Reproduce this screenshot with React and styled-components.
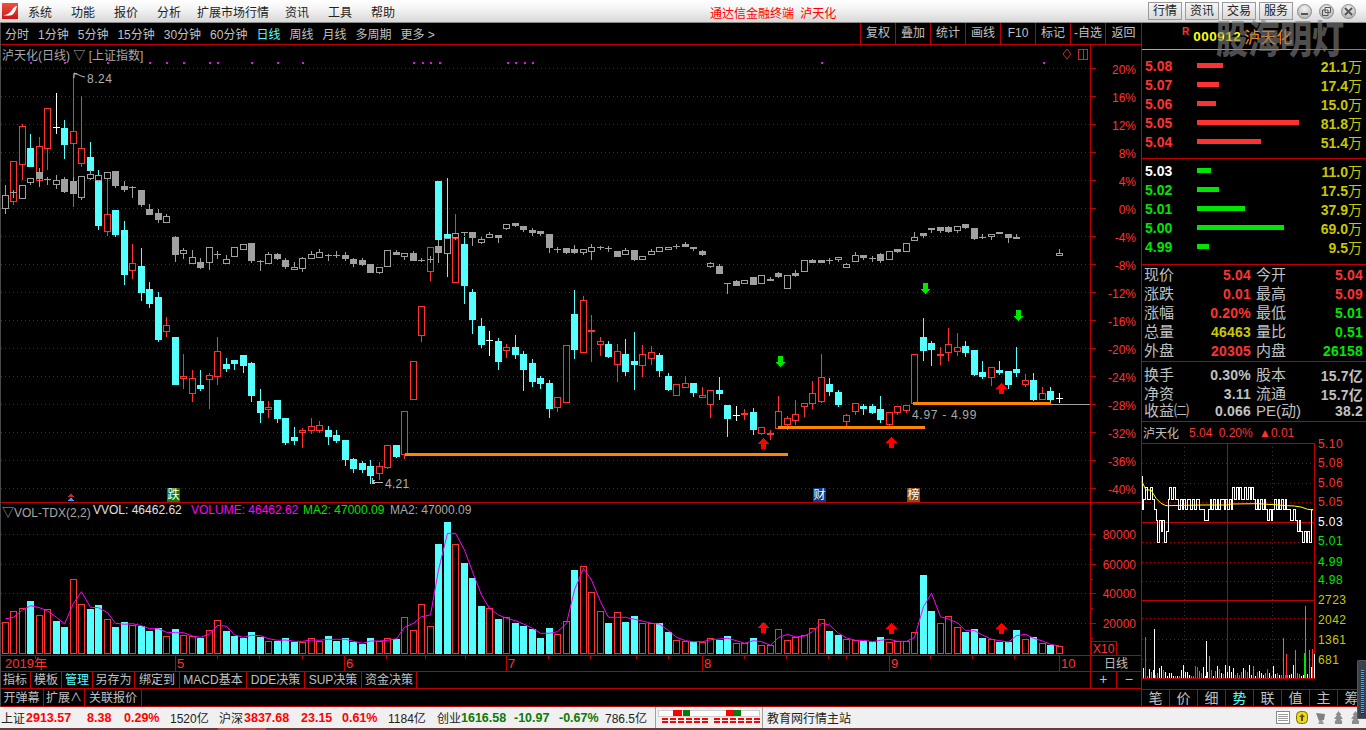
import React from 'react';
import styled, { createGlobalStyle } from 'styled-components';

const FONT = '"Liberation Sans", "Noto Sans CJK SC", sans-serif';
const LINE = '#c00000';
const RED = '#ff3232';
const CYAN = '#54ffff';
const GREEN = '#00e600';
const OLIVE = '#c8c800';
const TEXT = '#c0c0c0';

// kind, body top, body bottom, high, low
const CANDLES = [
  null,
  ['r', 161, 201, 161, 204], ['r', 126, 164, 124, 179], ['c', 148, 166, 134, 166], ['r', 146, 180, 137, 180],
  ['r', 108, 148, 108, 169], ['w', 127, 127, 93, 133], ['c', 128, 144, 120, 158], ['r', 131, 143, 75, 206],
  ['r', 148, 163, 96, 166], ['c', 157, 170, 142, 174], ['c', 177, 225, 170, 229], ['r', 214, 231, 177, 235],
  ['c', 210, 234, 210, 236], ['c', 230, 274, 221, 284], ['r', 263, 270, 244, 278], ['c', 266, 292, 248, 300],
  ['c', 289, 303, 282, 307], ['c', 297, 339, 292, 341], ['r', 325, 331, 317, 336], ['c', 337, 384, 337, 384],
  ['r', 376, 378, 354, 388], ['r', 378, 393, 370, 401], ['c', 385, 388, 370, 390], ['r', 375, 379, 373, 408],
  ['r', 351, 376, 337, 384], ['c', 364, 368, 358, 371], ['c', 360, 363, 360, 369], ['c', 355, 365, 355, 372],
  ['c', 363, 395, 362, 401], ['c', 401, 412, 389, 422], ['r', 407, 409, 401, 417], ['c', 400, 418, 400, 422],
  ['c', 418, 442, 418, 444], ['c', 437, 440, 427, 444], ['r', 430, 432, 428, 447], ['r', 426, 430, 418, 433],
  ['r', 425, 430, 421, 432], ['c', 430, 436, 426, 444], ['c', 435, 440, 430, 442], ['c', 440, 459, 440, 465],
  ['c', 459, 468, 458, 472], ['c', 463, 469, 461, 472], ['c', 466, 475, 460, 483], ['r', 466, 473, 462, 479],
  ['r', 445, 467, 445, 468], ['c', 445, 456, 445, 457], ['r', 411, 454, 411, 458], ['r', 361, 399, 361, 399],
  ['r', 306, 335, 306, 341], ['r', 247, 271, 247, 280], ['c', 181, 239, 181, 262], ['c', 234, 238, 178, 276],
  ['r', 238, 282, 214, 282],
  ['c', 244, 285, 237, 303], ['c', 292, 319, 289, 333], ['c', 326, 344, 318, 347], ['w', 340, 340, 331, 355],
  ['c', 341, 361, 338, 369], ['r', 347, 350, 344, 357], ['c', 347, 354, 335, 358], ['c', 354, 369, 351, 390],
  ['c', 363, 381, 359, 386], ['c', 378, 383, 376, 388], ['c', 383, 408, 380, 417], ['r', 397, 407, 397, 411],
  ['r', 345, 402, 345, 402], ['c', 314, 349, 290, 358], ['r', 300, 352, 296, 352], ['r', 330, 331, 315, 361],
  ['r', 341, 344, 337, 355], ['c', 344, 356, 341, 357], ['r', 351, 364, 344, 381], ['c', 354, 371, 339, 375],
  ['c', 361, 364, 332, 389], ['r', 354, 365, 345, 376], ['r', 352, 358, 346, 364], ['c', 355, 370, 353, 376],
  ['c', 376, 389, 373, 390], ['r', 384, 395, 384, 395], ['r', 383, 387, 376, 387], ['c', 383, 392, 383, 396],
  ['r', 395, 397, 387, 397], ['r', 390, 404, 390, 417], ['c', 390, 393, 377, 399], ['c', 405, 418, 405, 436],
  ['w', 415, 415, 406, 420], ['r', 413, 414, 409, 419], ['c', 412, 429, 408, 434], ['r', 427, 433, 427, 434],
  ['r', 433, 434, 430, 439], ['r', 411, 428, 396, 428], ['r', 418, 424, 416, 429], ['r', 414, 420, 400, 424],
  ['r', 403, 406, 403, 416], ['r', 393, 403, 381, 408], ['r', 377, 401, 354, 402], ['c', 384, 391, 378, 395],
  ['c', 392, 404, 390, 406], ['r', 415, 421, 414, 425], ['r', 403, 411, 403, 414], ['c', 406, 408, 404, 414],
  ['c', 406, 412, 404, 413], ['c', 409, 419, 396, 422], ['r', 412, 424, 412, 426], ['r', 406, 412, 406, 414],
  ['r', 405, 410, 405, 412], ['r', 354, 403, 354, 403], ['c', 337, 350, 318, 360], ['c', 343, 349, 341, 365],
  ['r', 354, 355, 347, 364], ['r', 344, 352, 328, 360], ['r', 347, 351, 333, 355], ['c', 346, 352, 341, 356],
  ['c', 350, 374, 350, 375], ['c', 372, 376, 361, 378], ['r', 367, 377, 367, 385], ['c', 370, 372, 361, 374],
  ['c', 371, 384, 371, 388], ['c', 369, 372, 347, 376], ['r', 380, 384, 374, 386], ['c', 380, 399, 373, 400],
  ['r', 393, 399, 387, 399], ['c', 391, 399, 387, 403], ['w', 398, 398, 393, 402],
];

// the 上证指数 overlay: s solid, h hollow, t thin
const INDEX = [
  ['h', 195, 208, 185, 213], ['t', 192, 192, 190, 197], ['h', 185, 198, 185, 198], ['h', 178, 182, 178, 184],
  ['s', 172, 178, 168, 186], ['t', 179, 179, 177, 184], ['h', 180, 184, 175, 188], ['s', 179, 191, 177, 192],
  ['s', 181, 193, 177, 193], ['h', 176, 197, 176, 199], ['h', 174, 178, 170, 179], ['h', 175, 180, 175, 181],
  ['h', 172, 178, 172, 178], ['s', 171, 185, 171, 187], ['s', 186, 189, 181, 191], ['t', 187, 187, 186, 197],
  ['s', 190, 204, 190, 206], ['s', 209, 214, 204, 214], ['s', 213, 219, 209, 222], ['h', 216, 222, 214, 222],
  ['s', 237, 254, 236, 261], ['h', 250, 253, 248, 258], ['h', 257, 263, 250, 263], ['s', 262, 267, 258, 268],
  ['h', 247, 262, 247, 269], ['t', 254, 254, 251, 258], ['h', 259, 263, 255, 263], ['h', 247, 256, 247, 256],
  ['h', 244, 249, 244, 249], ['s', 243, 260, 243, 262], ['t', 261, 261, 260, 270], ['h', 254, 263, 252, 263],
  ['s', 254, 258, 253, 259], ['s', 260, 266, 258, 268], ['h', 267, 269, 262, 269], ['h', 258, 268, 257, 271],
  ['h', 254, 258, 251, 258], ['h', 252, 257, 249, 257], ['t', 255, 255, 254, 260], ['t', 255, 255, 251, 257],
  ['s', 255, 258, 252, 260], ['s', 259, 263, 258, 266], ['s', 260, 264, 258, 265], ['s', 264, 272, 264, 272],
  ['h', 267, 272, 267, 273], ['h', 250, 266, 250, 266], ['s', 252, 254, 250, 254], ['h', 253, 256, 253, 259],
  ['s', 253, 260, 251, 260], ['t', 260, 260, 258, 261], ['t', 259, 259, 256, 262], ['s', 246, 252, 240, 262],
  ['h', 238, 253, 238, 253], ['h', 233, 237, 233, 239],
  ['t', 232, 232, 232, 235], ['s', 232, 237, 232, 245], ['h', 239, 242, 237, 243], ['h', 234, 237, 232, 237],
  ['s', 235, 237, 235, 242], ['h', 224, 228, 224, 229], ['s', 223, 225, 223, 226], ['s', 226, 229, 226, 231],
  ['s', 230, 232, 228, 235], ['s', 231, 233, 231, 235], ['s', 234, 247, 234, 252], ['t', 249, 249, 247, 252],
  ['s', 248, 252, 248, 253], ['s', 249, 252, 245, 253], ['h', 249, 252, 249, 254], ['h', 247, 251, 244, 259],
  ['t', 247, 247, 246, 249], ['t', 248, 248, 246, 251], ['s', 251, 256, 251, 256], ['h', 250, 254, 248, 254],
  ['s', 250, 259, 250, 260], ['h', 256, 259, 256, 259], ['h', 251, 254, 249, 254], ['h', 247, 251, 247, 251],
  ['h', 247, 249, 247, 249], ['t', 246, 246, 244, 248], ['s', 244, 246, 242, 246], ['s', 247, 248, 247, 250],
  ['s', 251, 254, 250, 255], ['h', 263, 266, 262, 267], ['s', 266, 273, 264, 273], ['t', 283, 283, 283, 293],
  ['s', 281, 285, 280, 285], ['h', 280, 283, 280, 283], ['s', 277, 284, 277, 284], ['h', 275, 283, 275, 283],
  ['s', 279, 280, 277, 280], ['s', 273, 276, 272, 277], ['h', 275, 288, 275, 288], ['s', 273, 275, 270, 276],
  ['h', 260, 271, 260, 271], ['s', 260, 262, 259, 262], ['s', 260, 262, 260, 262], ['t', 260, 260, 258, 263],
  ['h', 257, 259, 257, 261], ['h', 264, 267, 263, 267], ['h', 255, 261, 252, 261], ['s', 255, 257, 255, 259],
  ['t', 258, 258, 256, 261], ['s', 254, 260, 253, 262], ['h', 251, 259, 251, 259], ['s', 249, 251, 249, 252],
  ['h', 243, 251, 243, 251], ['h', 237, 240, 232, 240], ['s', 233, 235, 233, 237], ['s', 228, 229, 228, 232],
  ['s', 227, 230, 227, 232], ['s', 227, 231, 226, 232], ['h', 226, 230, 226, 232], ['s', 224, 227, 224, 228],
  ['s', 228, 238, 228, 239], ['t', 237, 237, 234, 238], ['h', 234, 236, 234, 239], ['s', 232, 233, 232, 233],
  ['s', 234, 237, 234, 242], ['s', 237, 238, 234, 238], null, null, null, null,
  ['h', 253, 255, 249, 255],
];

const VOL_TOPS = [
  622, 611, 608, 601, 615, 609, 621, 627, 579, 604, 609, 605, 619, 627, 622, 625, 626, 631, 628, 636,
  629, 635, 636, 638, 630, 620, 631, 636, 638, 632, 637, 641, 641, 638, 642, 642, 638, 641, 636, 641,
  638, 642, 644, 638, 641, 638, 639, 617, 630, 604, 626, 544, 522, 544, 563, 578, 606, 608, 619, 617,
  623, 626, 629, 638, 628, 634, 621, 570, 566, 592, 611, 623, 612, 622, 616, 623, 623, 623, 632, 640,
  641, 642, 642, 638, 640, 636, 643, 643, 638, 645, 645, 629, 640, 637, 635, 628, 619, 631, 635, 639,
  640, 641, 642, 637, 642, 641, 641, 632, 575, 611, 623, 616, 627, 632, 629, 638, 639, 642, 642, 630,
  639, 637, 643, 645, 646,
];
const VOL_KIND = { 0: 'r', 6: 'c', 57: 'r', 86: 'r', 124: 'r' };

const MA_LINE = [
  356, 352, 330, 317, 323, 333, 352, 372, 310, 275, 322, 323, 338, 370, 373, 371, 377, 386, 386, 397,
  398, 398, 408, 412, 402, 376, 379, 405, 412, 406, 407, 416, 421, 420, 424, 424, 420, 421, 418, 418,
  418, 424, 430, 423, 423, 421, 416, 382, 370, 350, 345, 210, 100, 100, 150, 215, 285, 325, 345, 355,
  362, 372, 385, 400, 400, 395, 370, 270, 205, 240, 305, 352, 352, 352, 358, 363, 370, 372, 392, 412,
  422, 425, 425, 419, 417, 415, 422, 430, 422, 425, 436, 413, 403, 411, 408, 395, 370, 375, 400, 414,
  421, 421, 425, 421, 418, 424, 424, 412, 320, 280, 350, 358, 368, 392, 392, 405, 418, 422, 426, 407,
  403, 415, 423, 433, 438,
].map(v => 500 + v / 3);

const DOTS = [30, 64, 107, 149, 166, 183, 209, 217, 251, 277, 302, 413, 422, 430, 439, 507, 515, 524, 532, 821, 1043];
const PERCENTS = ['20%', '16%', '12%', '8%', '4%', '0%', '-4%', '-8%', '-12%', '-16%', '-20%', '-24%', '-28%', '-32%', '-36%', '-40%'];
const VOL_AXIS = [['80000', 534], ['60000', 564], ['40000', 593], ['20000', 623]];

const ASKS = [['5.08', 26, '21.1'], ['5.07', 22, '17.4'], ['5.06', 19, '15.0'], ['5.05', 102, '81.8'], ['5.04', 64, '51.4']];
const BIDS = [['5.03', 14, '11.0'], ['5.02', 22, '17.5'], ['5.01', 48, '37.9'], ['5.00', 87, '69.0'], ['4.99', 12, '9.5']];

const QUOTES = [
  ['现价', '5.04', RED, '今开', '5.04', RED],
  ['涨跌', '0.01', RED, '最高', '5.09', RED],
  ['涨幅', '0.20%', RED, '最低', '5.01', GREEN],
  ['总量', '46463', OLIVE, '量比', '0.51', GREEN],
  ['外盘', '20305', RED, '内盘', '26158', GREEN],
];
const FINANCE = [
  ['换手', '0.30%', '股本', '15.7亿'],
  ['净资', '3.11', '流通', '15.7亿'],
  ['收益㈡', '0.066', 'PE(动)', '38.2'],
];

const INTRA_AXIS = [
  ['5.10', 448, RED], ['5.08', 467, RED], ['5.06', 487, RED], ['5.05', 506, RED], ['5.03', 526, '#fff'],
  ['5.01', 545, GREEN], ['4.99', 566, GREEN], ['4.98', 584, GREEN], ['2723', 604, OLIVE], ['2042', 624, OLIVE],
  ['1361', 644, OLIVE], ['681', 664, OLIVE],
];
const LEVELS = { a: 487, b: 499, c: 509, d: 520, e: 531, f: 542 };
const INTRA_STEPS = 'cbabbabcdfdedfebababbcbcbcbbcbcbbcccddcbcbcbcbbcbcbcabababbabababcbcbcbcdcdcbcbcbcbccddcdedefefefc';
const INTRA_AVG = [[3, 125], [15, 150], [30, 150], [45, 175], [60, 190], [75, 197], [180, 195], [260, 195], [270, 192], [350, 191], [400, 194], [440, 197], [460, 198], [480, 201], [500, 208], [517, 210]];
const INTRA_VOL_PEAKS = [[1145, 637, RED], [1154, 629, '#fff'], [1206, 641, '#fff'], [1209, 656, GREEN], [1283, 638, GREEN], [1286, 654, RED], [1295, 650, GREEN], [1305, 606, GREEN], [1304, 653, GREEN], [1309, 650, GREEN], [1312, 649, RED], [1314, 654, '#fff']];

const xAt = i => Math.floor(5.3 + 8.5 * i);

function candleColor(kind) {
  if (kind === 'r') return RED;
  if (kind === 'c') return CYAN;
  if (kind === 'w') return '#fff';
  return '#a0a0a0';
}

const GlobalStyle = createGlobalStyle`
  html, body { margin: 0; padding: 0; background: #000; }
  body { font-family: ${FONT}; font-size: 12px; }
`;

const Window = styled.div`
  position: relative;
  width: 1366px;
  height: 730px;
  overflow: hidden;
  display: flex;
  flex-direction: column;
  background: #000;
  &::after {
    content: '';
    position: absolute;
    left: 0;
    top: 23px;
    bottom: 23px;
    width: 1px;
    background: #4a4a4a;
  }
`;

const TitleBar = styled.header`
  height: 23px;
  flex: none;
  box-sizing: border-box;
  display: flex;
  align-items: center;
  padding-left: 2px;
  background: linear-gradient(#ffffff, #f4f4f4 40%, #d8d8d8);
  border-bottom: 1px solid #8a8a8a;
`;

const Menu = styled.nav`
  display: flex;
  margin-left: 10px;
`;

const MenuItem = styled.span`
  width: ${p => p.$w}px;
  color: #222;
  font-size: 12px;
`;

const AppTitle = styled.span`
  position: absolute;
  left: 710px;
  top: 4px;
  color: #f00;
  font-size: 12px;
  word-spacing: 3px;
`;

const TopButtons = styled.div`
  margin-left: auto;
  display: flex;
  align-items: center;
  gap: 3px;
  padding-right: 10px;
`;

const TopButton = styled.span`
  width: 34px;
  height: 18px;
  box-sizing: border-box;
  border: 1px solid #9a9a9a;
  background: linear-gradient(#f6f6f6, #d8d8d8);
  color: #222;
  font-size: 12px;
  line-height: 16px;
  text-align: center;
`;

const RoundButton = styled.span`
  width: 15px;
  height: 15px;
  flex: none;
  box-sizing: border-box;
  margin-left: ${p => p.$gap || 4}px;
  border-radius: 50%;
  border: 1px solid #8a8a8a;
  background: radial-gradient(circle at 50% 30%, #f4f4f4, #a8a8a8);
  display: flex;
  align-items: center;
  justify-content: center;
`;

const Watermark = styled.div`
  position: absolute;
  left: 1216px;
  top: 15px;
  color: rgba(125, 125, 125, 0.65);
  font: 900 32px "Noto Sans CJK SC", sans-serif;
  line-height: 42px;
  transform: scaleY(1.2);
  z-index: 3;
  pointer-events: none;
`;

const Body = styled.main`
  flex: 1;
  min-height: 0;
  display: flex;
`;

const ChartColumn = styled.section`
  width: 1141px;
  flex: none;
  display: flex;
  flex-direction: column;
`;

const PeriodBar = styled.div`
  height: 22px;
  flex: none;
  box-sizing: border-box;
  border-bottom: 1px solid ${LINE};
  display: flex;
  align-items: center;
  padding-left: 5px;
  gap: 9px;
  color: ${TEXT};
`;

const Period = styled.span`
  color: ${p => (p.$active ? CYAN : TEXT)};
  font-size: 12px;
`;

const ToolStrip = styled.div`
  margin-left: auto;
  height: 100%;
  display: flex;
`;

const ToolCell = styled.span`
  width: ${p => p.$w || 35}px;
  box-sizing: border-box;
  border-left: 1px solid ${LINE};
  text-align: center;
  line-height: 21px;
  color: ${TEXT};
`;

const Pane = styled.div`
  position: relative;
  flex: none;
  height: ${p => p.$h}px;
`;

const PaneHead = styled.div`
  position: absolute;
  left: ${p => p.$x}px;
  top: ${p => p.$y}px;
  color: ${p => p.$color || '#a8a8a8'};
  font-size: 12px;
  white-space: nowrap;
`;

const Drawing = styled.svg`
  display: block;
  overflow: visible;
  font-family: ${FONT};
  font-size: 12px;
`;

const DateRow = styled.div`
  height: 16px;
  flex: none;
  display: flex;
`;

const SideCell = styled.div`
  width: 51px;
  flex: none;
  box-sizing: border-box;
  border-left: 1px solid ${LINE};
  border-bottom: 1px solid ${LINE};
  color: ${TEXT};
  text-align: center;
  line-height: 16px;
`;

const TabRow = styled.div`
  height: ${p => p.$h}px;
  flex: none;
  box-sizing: border-box;
  display: flex;
  border-bottom: 1px solid ${LINE};
`;

const Tab = styled.span`
  width: ${p => p.$w}px;
  box-sizing: border-box;
  border-right: 1px solid ${LINE};
  text-align: center;
  color: ${p => (p.$active ? CYAN : TEXT)};
  line-height: ${p => p.$lh || 16}px;
`;

const ZoomBox = styled.div`
  margin-left: auto;
  width: 51px;
  box-sizing: border-box;
  border-left: 1px solid ${LINE};
  display: flex;
  color: ${TEXT};
  span {
    flex: 1;
    text-align: center;
    font-size: 14px;
    line-height: 15px;
  }
  span + span { border-left: 1px solid ${LINE}; }
`;

const SidePanel = styled.aside`
  flex: 1;
  min-width: 0;
  box-sizing: border-box;
  border-left: 1px solid ${LINE};
  display: flex;
  flex-direction: column;
`;

const StockHead = styled.div`
  height: 27px;
  flex: none;
  box-sizing: border-box;
  display: flex;
  align-items: center;
  padding-left: 40px;
  border-bottom: 1px solid;
  border-image: linear-gradient(90deg, #e0a030 66%, #4a90c8 66%) 1;
`;

const RFlag = styled.span`
  color: ${RED};
  font-weight: bold;
  font-size: 10px;
  margin-right: 4px;
  margin-top: -9px;
`;

const StockCode = styled.span`
  color: #ff0;
  font-weight: bold;
  font-size: 13.5px;
  letter-spacing: .5px;
`;

const StockName = styled.span`
  color: #ff8c1a;
  font-size: 16px;
  margin-left: 3px;
`;

const BookSection = styled.div`
  flex: none;
  padding: ${p => p.$pad};
  border-bottom: 1px solid ${LINE};
`;

const BookRow = styled.div`
  height: 19px;
  display: flex;
  align-items: center;
  padding-left: 3px;
`;

const BookPrice = styled.span`
  width: 52px;
  flex: none;
  color: ${p => p.$color};
  font-weight: bold;
  font-size: 14px;
`;

const BookBar = styled.i`
  display: block;
  height: 5px;
  background: ${p => p.$color};
`;

const BookVol = styled.span`
  margin-left: auto;
  padding-right: 4px;
  color: ${OLIVE};
  font-weight: bold;
  font-size: 14px;
  small {
    font-weight: normal;
    font-size: 14px;
  }
`;

const QuoteBlock = styled.div`
  flex: none;
  height: ${p => p.$h}px;
  box-sizing: border-box;
  padding: ${p => p.$top || 0}px 0 0 2px;
  border-bottom: 1px solid ${LINE};
`;

const QuoteRow = styled.div`
  height: ${p => p.$h}px;
  display: grid;
  grid-template-columns: 107px 107px;
  gap: 5px;
  align-items: center;
`;

const QuoteCell = styled.div`
  display: flex;
  justify-content: space-between;
  align-items: center;
`;

const QuoteLabel = styled.span`
  color: ${TEXT};
  font-size: 15px;
  line-height: 18px;
`;

const QuoteValue = styled.span`
  color: ${p => p.$color || TEXT};
  font-weight: bold;
  font-size: 14px;
  letter-spacing: .2px;
`;

const IntraHead = styled.div`
  height: 21px;
  flex: none;
  display: flex;
  align-items: center;
  padding-left: 1px;
  color: ${RED};
  font-size: 12px;
  word-spacing: 3px;
`;

const IntraName = styled.span`
  color: ${TEXT};
  width: 46px;
  font-size: 12px;
`;

const SideTabs = styled.div`
  flex: none;
  height: 18px;
  box-sizing: border-box;
  display: flex;
  border-top: 1px solid ${LINE};
  border-bottom: 1px solid ${LINE};
`;

const SideTab = styled.span`
  width: 28px;
  flex: none;
  box-sizing: border-box;
  border-right: 1px solid ${LINE};
  text-align: center;
  font-size: 14px;
  line-height: 16px;
  color: ${p => (p.$active ? CYAN : TEXT)};
`;

const StatusBar = styled.footer`
  height: 21px;
  flex: none;
  display: flex;
  align-items: center;
  padding-left: 1px;
  background: #f0f0f0;
  color: #222;
`;

const StatusCell = styled.span`
  width: ${p => p.$w}px;
  flex: none;
  color: ${p => p.$color || '#222'};
  font-weight: ${p => (p.$color ? 'bold' : 'normal')};
  font-size: ${p => (p.$color ? 12.5 : 12)}px;
  white-space: nowrap;
`;

const StatusDivider = styled.i`
  display: block;
  width: 1px;
  height: 21px;
  margin: 0 ${p => p.$after || 2}px 0 ${p => p.$before || 0}px;
  background: #a0a0a0;
`;

const TrayIcons = styled.div`
  margin-left: auto;
  padding-right: 5px;
  display: flex;
  align-items: center;
  gap: 6px;
`;

const BottomStrip = styled.div`
  height: 2px;
  flex: none;
  background: linear-gradient(90deg, #6b3a3a 218px, #b85050 218px, #b85050 266px, #6b3a3a 266px);
`;

const Meter = styled.div`
  position: absolute;
  left: 1357px;
  top: 660px;
  width: 9px;
  height: 59px;
  box-sizing: border-box;
  border: 1px solid #555;
  border-right: 0;
  border-radius: 2px 0 0 2px;
  background: #39414a;
  padding: 9px 2px 4px 3px;
  z-index: 2;
`;

const MeterTrack = styled.div`
  width: 3px;
  height: 100%;
  background: repeating-linear-gradient(#6aa8d8 0 1px, #1a2a3a 1px 2px);
`;

function Candle({ x, d }) {
  const [kind, top, bot, high, low] = d;
  const color = candleColor(kind);
  const mid = x + 0.5;
  const wick = <line x1={mid} x2={mid} y1={high} y2={low + 1} stroke={color} />;
  if (bot - top < 1 || kind === 'w' || kind === 't') {
    return (
      <g>
        {wick}
        <line x1={x - 3} x2={x + 4} y1={top + 0.5} y2={top + 0.5} stroke={color} />
      </g>
    );
  }
  if (kind === 'c' || kind === 's') {
    return (
      <g>
        {wick}
        <rect x={x - 3} y={top} width={7} height={bot - top + 1} fill={color} />
      </g>
    );
  }
  return (
    <g>
      {wick}
      <rect x={x - 2.5} y={top + 0.5} width={6} height={bot - top} fill="#000" stroke={color} />
    </g>
  );
}

function Arrow({ x, top, up }) {
  const color = up ? '#f00' : GREEN;
  const path = up
    ? `M${x + 0.5} ${top}l5.500 5.500h-3v5.500h-5v-5.500h-3z`
    : `M${x + 0.5} ${top + 11}l5.500 -5.500h-3v-5.500h-5v5.500h-3z`;
  return <path d={path} fill={color} />;
}

function Badge({ x, bg, children }) {
  return (
    <g>
      <rect x={x} y={488} width={13} height={14} fill={bg} />
      <text x={x + 0.5} y={499} fill="#fff" fontSize="12">{children}</text>
    </g>
  );
}

function PriceChart() {
  return (
    <Drawing width="1141" height="458" viewBox="0 45 1141 458" shapeRendering="crispEdges">
      {PERCENTS.map((label, i) => {
        const y = 68.5 + 28 * i;
        return (
          <g key={label}>
            <line x1="1" x2="1090" y1={y} y2={y} stroke="#b00000" strokeDasharray="1 3" />
            <line x1="1090" x2="1096" y1={y} y2={y} stroke={LINE} />
            <text x="1136" y={y + 5} textAnchor="end" fill={RED} shapeRendering="auto">{label}</text>
          </g>
        );
      })}
      <line x1="1090.5" x2="1090.5" y1="45" y2="503" stroke={LINE} />
      <line x1="0" x2="1141" y1="502.5" y2="502.5" stroke={LINE} />
      {DOTS.map(x => <rect key={x} x={x} y="62" width="2" height="2" fill="#f0f" />)}
      {CANDLES.map((d, i) => d && <Candle key={i} x={xAt(i)} d={d} />)}
      {INDEX.map((d, i) => d && <Candle key={i} x={xAt(i)} d={d} />)}
      <rect x="405" y="453" width="383" height="3" fill="#ff8400" />
      <rect x="778" y="426" width="147" height="3" fill="#ff8400" />
      <rect x="913" y="402" width="138" height="3" fill="#ff8400" />
      <line x1="1051" x2="1090" y1="404.5" y2="404.5" stroke="#a0a0a0" />
      <Arrow x={780} top={356} />
      <Arrow x={925} top={283} />
      <Arrow x={1018} top={310} />
      <Arrow x={763} top={438} up />
      <Arrow x={891} top={437} up />
      <Arrow x={1001} top={383} up />
      <path d="M74 73v5M74 73l3 1M74 74h3l2 1 2 1 4 1" fill="none" stroke="#bbb" shapeRendering="auto" />
      <text x="87" y="83" fill="#b0b0b0" letterSpacing=".5">8.24</text>
      <path d="M372 478v6M372 482h11M372 482l3-2M372 482l3 2" fill="none" stroke="#bbb" />
      <text x="385" y="488" fill="#b0b0b0" letterSpacing=".3">4.21</text>
      <text x="912" y="419" fill="#a8a8a8" letterSpacing=".7">4.97 - 4.99</text>
      <path d="M71 493l3 4h-7z" fill="#d02020" />
      <path d="M71 497l3 4h-7z" fill="#30a0ff" />
      <Badge x={167} bg="#0a7a0a">跌</Badge>
      <Badge x={813} bg="#0a3a8a">财</Badge>
      <Badge x={907} bg="#8a4a10">榜</Badge>
      <path d="M1067 49l4 5-4 5-4-5z" fill="none" stroke="#c03030" shapeRendering="auto" />
      <rect x="1078.5" y="49.5" width="9" height="10" fill="none" stroke="#c03030" />
      <line x1="1083.5" x2="1083.5" y1="49" y2="60" stroke="#c03030" />
    </Drawing>
  );
}

function VolumeChart() {
  const maPoints = MA_LINE.map((y, i) => `${xAt(i) + 0.5},${y.toFixed(1)}`).join(' ');
  return (
    <Drawing width="1141" height="153" viewBox="0 503 1141 153">
      <g shapeRendering="crispEdges">
        {VOL_AXIS.map(([label, y]) => (
          <g key={label}>
            <line x1="1" x2="1090" y1={y + 0.5} y2={y + 0.5} stroke="#b00000" strokeDasharray="1 3" />
            <line x1="1090" x2="1096" y1={y + 0.5} y2={y + 0.5} stroke={LINE} />
            <line x1="1090" x2="1093" y1={y + 15.5} y2={y + 15.5} stroke={LINE} />
          </g>
        ))}
        <line x1="1090.5" x2="1090.5" y1="503" y2="656" stroke={LINE} />
        <line x1="0" x2="1141" y1="655.5" y2="655.5" stroke={LINE} />
        {VOL_TOPS.map((top, i) => {
          const x = xAt(i);
          const kind = VOL_KIND[i] || CANDLES[i][0];
          return kind === 'c'
            ? <rect key={i} x={x - 3} y={top} width={7} height={654 - top} fill={CYAN} />
            : <rect key={i} x={x - 2.5} y={top + 0.5} width={6} height={653 - top} fill="#000" stroke={RED} />;
        })}
        <rect x="1091.5" y="641.5" width="25" height="14" fill="#000" stroke={LINE} />
      </g>
      <polyline points={maPoints} fill="none" stroke="#f0f" />
      <g shapeRendering="crispEdges">
        <Arrow x={763} top={622} up />
        <Arrow x={891} top={623} up />
        <Arrow x={1001} top={623} up />
      </g>
      {VOL_AXIS.map(([label, y]) => (
        <text key={label} x="1136" y={y + 5} textAnchor="end" fill={RED}>{label}</text>
      ))}
      <text x="1093" y="653" fill={RED}>X10</text>
    </Drawing>
  );
}

function DateAxis() {
  const major = [[175, '5'], [344, '6'], [506, '7'], [702, '8'], [889, '9'], [1059, '10']];
  const minor = [217, 259, 302, 386, 425, 465, 548, 590, 636, 668, 744, 786, 828, 846, 930, 972, 1014];
  return (
    <Drawing width="1090" height="16" viewBox="0 656 1090 16" shapeRendering="crispEdges">
      <line x1="0" x2="1090" y1="671.5" y2="671.5" stroke={LINE} />
      <line x1="35.5" x2="35.5" y1="656" y2="659" stroke={LINE} />
      {minor.map(x => <line key={x} x1={x + 0.5} x2={x + 0.5} y1="656" y2="659" stroke={LINE} />)}
      {major.map(([x, label]) => (
        <g key={x}>
          <line x1={x + 0.5} x2={x + 0.5} y1="656" y2="672" stroke={LINE} />
          <text x={x + 2} y="668" fill={RED} fontSize="13" shapeRendering="auto">{label}</text>
        </g>
      ))}
      <text x="5" y="668" fill={RED} fontSize="13" shapeRendering="auto">2019年</text>
    </Drawing>
  );
}

function IntradayChart() {
  const stepW = 171 / INTRA_STEPS.length;
  let price = 'M1142 476';
  INTRA_STEPS.split('').forEach((c, i) => {
    const x = (1142 + i * stepW).toFixed(1);
    price += `L${x} ${LEVELS[c]}L${(1142 + (i + 1) * stepW).toFixed(1)} ${LEVELS[c]}`;
  });
  const avg = INTRA_AVG.map(([x, y]) => `${1141 + x / 3},${(440 + y / 3).toFixed(1)}`).join(' ');
  const bars = [];
  let seed = 97;
  for (let x = 1143; x < 1313; x += 2) {
    seed = (seed * 137 + 11) % 1009;
    const h = 2 + ((seed % 100) * (seed % 100)) / 900;
    const color = seed % 5 === 0 ? GREEN : seed % 5 === 1 ? RED : '#fff';
    bars.push([x, 678 - h, color]);
  }
  return (
    <Drawing width="224" height="246" viewBox="1142 443 224 246">
      <g shapeRendering="crispEdges">
        {[463, 483, 502, 542, 562, 581, 618, 639, 659].map(y => (
          <line key={y} x1="1142" x2="1314" y1={y + 0.5} y2={y + 0.5} stroke="#b00000" strokeDasharray="1 3" />
        ))}
        {[1184, 1272].map(x => (
          <line key={x} x1={x + 0.5} x2={x + 0.5} y1="443" y2="678" stroke="#b00000" strokeDasharray="1 3" />
        ))}
        <line x1="1142" x2="1315" y1="443.5" y2="443.5" stroke={LINE} />
        <line x1="1142" x2="1315" y1="522.5" y2="522.5" stroke={LINE} />
        <line x1="1142" x2="1315" y1="600.5" y2="600.5" stroke={LINE} />
        <line x1="1142" x2="1315" y1="678.5" y2="678.5" stroke={LINE} />
        <line x1="1227.5" x2="1227.5" y1="443" y2="678" stroke={LINE} />
        <line x1="1314.5" x2="1314.5" y1="443" y2="679" stroke={LINE} />
        {bars.map(([x, y, color]) => <line key={x} x1={x + 0.5} x2={x + 0.5} y1={y} y2="678" stroke={color} />)}
        {INTRA_VOL_PEAKS.map(([x, y, color]) => <line key={x} x1={x + 0.5} x2={x + 0.5} y1={y} y2="678" stroke={color} />)}
        <path d={price} fill="none" stroke="#fff" />
      </g>
      <polyline points={avg} fill="none" stroke="#ff0" />
      {INTRA_AXIS.map(([label, y, color]) => (
        <text key={label} x="1318" y={y} fill={color} letterSpacing=".4">{label}</text>
      ))}
    </Drawing>
  );
}

function Logo() {
  return (
    <svg width="16" height="16" viewBox="0 0 16 16">
      <defs>
        <linearGradient id="logo-red" x1="0" y1="0" x2="0" y2="1">
          <stop offset="0" stopColor="#f05040" />
          <stop offset="1" stopColor="#c81818" />
        </linearGradient>
      </defs>
      <rect width="16" height="16" fill="url(#logo-red)" />
      <path d="M1 12C5 12 8 10 10 7c1-2 3-4 5-4-1 3-2 7-5 9-3 1-6 1-9 0z" fill="#fff" />
    </svg>
  );
}

function StatusMini() {
  const dashes = [4, 12, 20, 28, 36, 44, 56, 64, 72, 80, 88, 96];
  return (
    <svg width="102" height="15" viewBox="0 0 102 15" shapeRendering="crispEdges">
      <rect x=".5" y=".5" width="101" height="6" fill="#fff" stroke="#ccc" />
      <rect x="15" y="0" width="9" height="6" fill="#f00" />
      <rect x="25" y="0" width="7" height="6" fill="#0a7a0a" />
      <rect x="68" y="0" width="8" height="6" fill="#f00" />
      <rect x="76" y="0" width="7" height="6" fill="#0a7a0a" />
      {dashes.map(x => <rect key={x} x={x} y="8" width="6" height="2" fill="#f00" />)}
      {dashes.map(x => <rect key={x} x={x} y="11" width="6" height="2" fill="#f00" />)}
    </svg>
  );
}

function TrayList() {
  return (
    <svg width="14" height="13" viewBox="0 0 14 13" shapeRendering="crispEdges">
      <rect x=".5" y=".5" width="13" height="12" fill="#fff" stroke="#888" />
      <path d="M2 3.500h10M2 5.500h10M2 7.500h10M2 9.500h10" stroke="#999" />
    </svg>
  );
}

function TrayCoin() {
  return (
    <svg width="12" height="13" viewBox="0 0 12 13">
      <rect x=".5" y=".5" width="11" height="12" rx="4" fill="#e8d820" stroke="#807000" />
      <path d="M6 3l3 3H7v4H5V6H3z" fill="#5a5000" />
    </svg>
  );
}

function TrayDish() {
  return (
    <svg width="13" height="13" viewBox="0 0 13 13">
      <path d="M2 2l9 1-1 6-5 1z" fill="#808080" />
      <path d="M6 9l-2 4h6L8 9z" fill="#9a9a9a" />
    </svg>
  );
}

function TrayTree() {
  return (
    <svg width="11" height="13" viewBox="0 0 11 13">
      <path d="M5.500 0l3 4H7l3 4H7.500l2 3h-8l2-3H1l3-4H2.500z" fill="#8c8c8c" />
      <rect x="2" y="11" width="7" height="2" fill="#8c8c8c" />
    </svg>
  );
}

function BookBlock({ rows, pad, barColor, priceColor }) {
  return (
    <BookSection $pad={pad}>
      {rows.map(([price, width, vol], i) => (
        <BookRow key={price}>
          <BookPrice $color={priceColor(i)}>{price}</BookPrice>
          <BookBar $color={barColor} style={{ width }} />
          <BookVol>{vol}<small>万</small></BookVol>
        </BookRow>
      ))}
    </BookSection>
  );
}

export default function App() {
  return (
    <Window>
      <GlobalStyle />
      <TitleBar>
        <Logo />
        <Menu>
          {[['系统', 43], ['功能', 43], ['报价', 43], ['分析', 40], ['扩展市场行情', 88], ['资讯', 43], ['工具', 43], ['帮助', 43]].map(([label, w]) => (
            <MenuItem key={label} $w={w}>{label}</MenuItem>
          ))}
        </Menu>
        <AppTitle>通达信金融终端 泸天化</AppTitle>
        <TopButtons>
          <TopButton>行情</TopButton>
          <TopButton>资讯</TopButton>
          <TopButton>交易</TopButton>
          <TopButton>服务</TopButton>
          <RoundButton $gap={1}>
            <svg width="9" height="9" viewBox="0 0 9 9"><rect x="1" y="6" width="7" height="2" fill="#555" /></svg>
          </RoundButton>
          <RoundButton>
            <svg width="9" height="9" viewBox="0 0 9 9"><path d="M3 .5h5.500v5H3zM.5 3h5.500v5.500H.5z" fill="none" stroke="#555" /></svg>
          </RoundButton>
          <RoundButton>
            <svg width="9" height="9" viewBox="0 0 9 9"><path d="M1 1l7 7M8 1l-7 7" stroke="#555" strokeWidth="2" /></svg>
          </RoundButton>
        </TopButtons>
      </TitleBar>

      <Body>
        <ChartColumn>
          <PeriodBar>
            {['分时', '1分钟', '5分钟', '15分钟', '30分钟', '60分钟'].map(label => <Period key={label}>{label}</Period>)}
            <Period $active>日线</Period>
            {['周线', '月线', '多周期', '更多 >'].map(label => <Period key={label}>{label}</Period>)}
            <ToolStrip>
              {['复权', '叠加', '统计', '画线', 'F10', '标记', '-自选'].map(label => <ToolCell key={label}>{label}</ToolCell>)}
              <ToolCell $w={36}>返回</ToolCell>
            </ToolStrip>
          </PeriodBar>

          <Pane $h={458}>
            <PriceChart />
            <PaneHead $x={2} $y={1}>泸天化(日线) ▽ [上证指数]</PaneHead>
          </Pane>

          <Pane $h={153}>
            <VolumeChart />
            <PaneHead $x={2} $y={0}>▽VOL-TDX(2,2)</PaneHead>
            <PaneHead $x={93} $y={0} $color="#e0e0e0">VVOL: 46462.62</PaneHead>
            <PaneHead $x={191} $y={0} $color="#f0f">VOLUME: 46462.62</PaneHead>
            <PaneHead $x={303} $y={0} $color={GREEN}>MA2: 47000.09</PaneHead>
            <PaneHead $x={390} $y={0}>MA2: 47000.09</PaneHead>
          </Pane>

          <DateRow>
            <DateAxis />
            <SideCell>日线</SideCell>
          </DateRow>

          <TabRow $h={17}>
            {[['指标', 31], ['模板', 31], ['管理', 31, true], ['另存为', 42], ['绑定到', 45], ['MACD基本', 67], ['DDE决策', 58], ['SUP决策', 57], ['资金决策', 55]].map(([label, w, active]) => (
              <Tab key={label} $w={w} $active={active}>{label}</Tab>
            ))}
            <ZoomBox><span>+</span><span>−</span></ZoomBox>
          </TabRow>

          <TabRow $h={18}>
            <Tab $w={44} $lh={18}>开弹幕</Tab>
            <Tab $w={41} $lh={18}>扩展∧</Tab>
            <Tab $w={57} $lh={18}>关联报价</Tab>
          </TabRow>
        </ChartColumn>

        <SidePanel>
          <StockHead>
            <RFlag>R</RFlag>
            <StockCode>000912</StockCode>
            <StockName>泸天化</StockName>
          </StockHead>
          <BookBlock rows={ASKS} pad="6px 0 7px" barColor={RED} priceColor={() => RED} />
          <BookBlock rows={BIDS} pad="2px 0 8px" barColor={GREEN} priceColor={i => (i === 0 ? '#fff' : GREEN)} />
          <QuoteBlock $h={97}>
            {QUOTES.map(([l1, v1, c1, l2, v2, c2]) => (
              <QuoteRow key={l1} $h={19}>
                <QuoteCell><QuoteLabel>{l1}</QuoteLabel><QuoteValue $color={c1}>{v1}</QuoteValue></QuoteCell>
                <QuoteCell><QuoteLabel>{l2}</QuoteLabel><QuoteValue $color={c2}>{v2}</QuoteValue></QuoteCell>
              </QuoteRow>
            ))}
          </QuoteBlock>
          <QuoteBlock $h={60} $top={3}>
            {FINANCE.map(([l1, v1, l2, v2]) => (
              <QuoteRow key={l1} $h={18.5}>
                <QuoteCell><QuoteLabel>{l1}</QuoteLabel><QuoteValue>{v1}</QuoteValue></QuoteCell>
                <QuoteCell><QuoteLabel>{l2}</QuoteLabel><QuoteValue>{v2}</QuoteValue></QuoteCell>
              </QuoteRow>
            ))}
          </QuoteBlock>
          <IntraHead>
            <IntraName>泸天化</IntraName>
            5.04 0.20% ▲0.01
          </IntraHead>
          <IntradayChart />
          <SideTabs>
            {['笔', '价', '细'].map(label => <SideTab key={label}>{label}</SideTab>)}
            <SideTab $active>势</SideTab>
            {['联', '值', '主', '筹'].map(label => <SideTab key={label}>{label}</SideTab>)}
          </SideTabs>
        </SidePanel>
      </Body>

      <StatusBar>
        <StatusCell $w={25}>上证</StatusCell>
        <StatusCell $w={61} $color="#f00">2913.57</StatusCell>
        <StatusCell $w={37} $color="#f00">8.38</StatusCell>
        <StatusCell $w={46} $color="#f00">0.29%</StatusCell>
        <StatusCell $w={49}>1520亿</StatusCell>
        <StatusCell $w={25}>沪深</StatusCell>
        <StatusCell $w={57} $color="#f00">3837.68</StatusCell>
        <StatusCell $w={41} $color="#f00">23.15</StatusCell>
        <StatusCell $w={46} $color="#f00">0.61%</StatusCell>
        <StatusCell $w={49}>1184亿</StatusCell>
        <StatusCell $w={24}>创业</StatusCell>
        <StatusCell $w={53} $color="#0a7a0a">1616.58</StatusCell>
        <StatusCell $w={45} $color="#0a7a0a">-10.97</StatusCell>
        <StatusCell $w={46} $color="#0a7a0a">-0.67%</StatusCell>
        <StatusCell $w={50}>786.5亿</StatusCell>
        <StatusDivider />
        <StatusMini />
        <StatusDivider $before={2} $after={4} />
        <StatusCell $w={90}>教育网行情主站</StatusCell>
        <TrayIcons>
          <TrayList />
          <TrayCoin />
          <TrayDish />
          <TrayTree />
          <TrayTree />
        </TrayIcons>
      </StatusBar>
      <BottomStrip />

      <Watermark>股海明灯</Watermark>
      <Meter><MeterTrack /></Meter>
    </Window>
  );
}
